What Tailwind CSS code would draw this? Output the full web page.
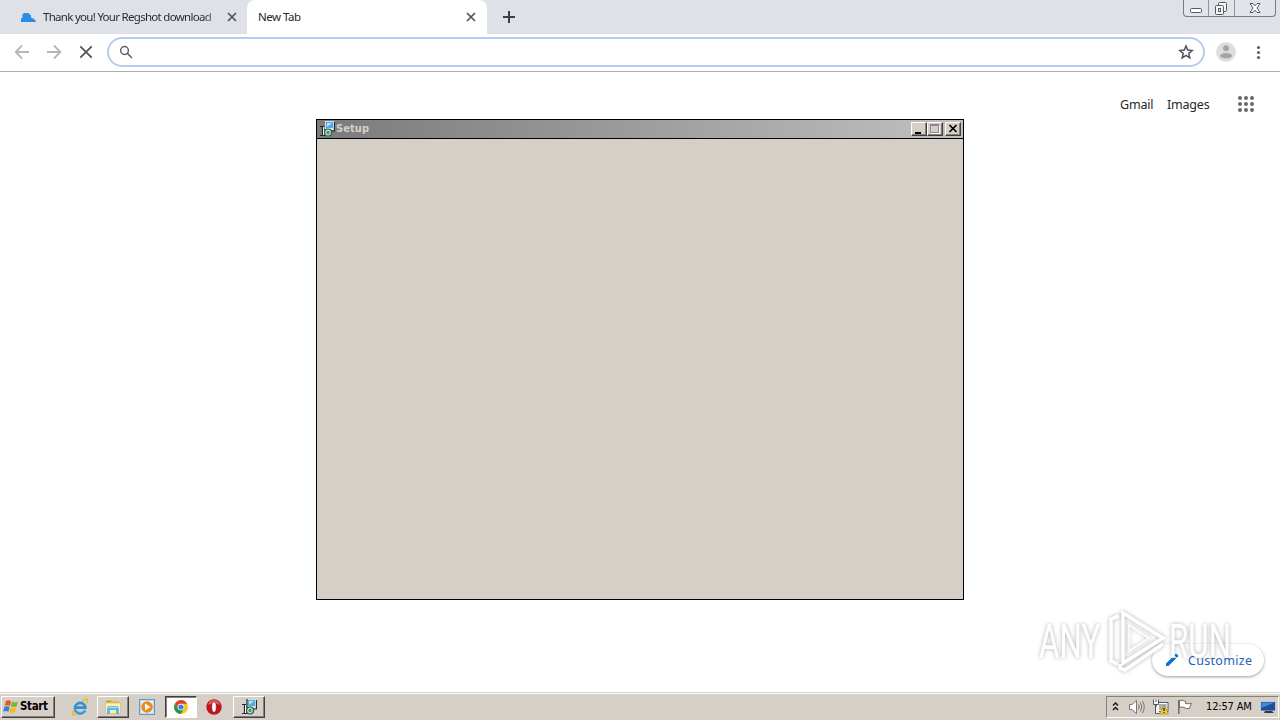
<!DOCTYPE html>
<html lang="en">
<head>
  <meta charset="utf-8">
  <title>New Tab</title>
  <script src="https://cdn.jsdelivr.net/npm/@tailwindcss/browser@4"></script>
</head>
<body class="relative flex h-[720px] w-[1280px] flex-col overflow-hidden bg-white font-['Noto_Sans',sans-serif] text-[#25272a]">

  <!-- tab strip -->
  <header class="flex h-[34px] shrink-0 items-stretch bg-[#dee1e6]">
    <div class="flex w-[247px] items-center rounded-br-lg pl-5">
      <svg class="h-4 w-4 shrink-0" viewBox="0 0 16 16"><path fill="#2b8ce8" d="M1 13V9.500L2.500 8.500V5L4.500 4H8.500L11 6.500V8.500L14 10L15.800 12V13Z"/></svg>
      <span class="ml-[7px] w-[175px] whitespace-nowrap bg-linear-to-r from-[#25272a] from-92% to-[#25272a]/40 bg-clip-text text-[11.500px] leading-[18px] tracking-[-0.710px] text-transparent">Thank you! Your Regshot download</span>
      <svg class="ml-[9px] h-[10px] w-[10px]" viewBox="0 0 10 10"><path stroke="#505357" stroke-width="1.700" d="M1 1L9 9M9 1L1 9"/></svg>
    </div>
    <div class="flex w-60 items-center rounded-t-lg bg-white pl-[11px]">
      <span class="w-[208px] text-[11.500px] leading-[18px] tracking-[-0.500px]">New Tab</span>
      <svg class="h-[10px] w-[10px]" viewBox="0 0 10 10"><path stroke="#505357" stroke-width="1.700" d="M1 1L9 9M9 1L1 9"/></svg>
    </div>
    <svg class="mt-[10px] ml-[15px] h-[14px] w-[14px]" viewBox="0 0 14 14"><path stroke="#3c4043" stroke-width="2" d="M7 1V13M1 7H13"/></svg>
    <div class="mr-1 ml-auto flex h-[17px] w-[93px] rounded-b-[4px] border border-t-0 border-[#787c82] bg-[#e1e4e8]">
      <div class="w-[25px] border-r border-[#92969b]"><svg class="h-4 w-6" viewBox="0 0 24 16"><rect x="6.500" y="8.500" width="11" height="4" rx="1" fill="#fff" stroke="#555a62"/></svg></div>
      <div class="w-[26px] border-r border-[#92969b]"><svg class="h-4 w-6" viewBox="0 0 24 16" fill="#f5f5f7" stroke="#555a62"><rect x="9.500" y="2.500" width="8" height="9" rx="1"/><rect x="6.500" y="5.500" width="8" height="9" rx="1"/><rect x="9.500" y="8.500" width="2" height="3"/></svg></div>
      <svg class="h-4 w-10" viewBox="0 0 40 16"><path fill="#fff" stroke="#555a62" stroke-width="1" d="M15 3.500H18L20 5.800L22 3.500H25L22 8L25 12.500H22L20 10.200L18 12.500H15L18 8Z"/></svg>
    </div>
  </header>

  <!-- toolbar -->
  <div class="flex h-[38px] shrink-0 items-center border-b border-[#a9b0b5] bg-white pb-px">
    <svg class="ml-[14px] h-4 w-4" viewBox="0 0 16 16" fill="none" stroke="#b5b7ba" stroke-width="1.800"><path d="M15 8H2M8 1.500L1.700 8L8 14.500"/></svg>
    <svg class="ml-4 h-4 w-4" viewBox="0 0 16 16" fill="none" stroke="#b5b7ba" stroke-width="1.800"><path d="M1 8H14M8 1.500L14.300 8L8 14.500"/></svg>
    <svg class="ml-4 h-4 w-4" viewBox="0 0 16 16" stroke="#505357" stroke-width="1.800"><path d="M2.300 2.300L13.700 13.700M13.700 2.300L2.300 13.700"/></svg>
    <div class="ml-[13px] flex h-[30px] w-[1098px] items-center justify-between rounded-full border-2 border-[#b5cdee] pr-[9px] pl-[10px]">
      <svg class="h-[14px] w-[14px]" viewBox="0 0 14 14" fill="none" stroke="#5f6368" stroke-width="1.500"><circle cx="5.500" cy="5.500" r="3.900"/><path d="M8.400 8.400L13 13"/></svg>
      <svg class="h-4 w-4" viewBox="0 0 16 16" fill="none" stroke="#505357" stroke-width="1.500"><path d="M8 2L9.700 6.100L14.200 6.500L10.800 9.400L11.800 13.800L8 11.400L4.200 13.800L5.200 9.400L1.800 6.500L6.300 6.100Z"/></svg>
    </div>
    <svg class="ml-[11px] h-5 w-5" viewBox="0 0 20 20"><circle cx="10" cy="10" r="10" fill="#dddedf"/><circle cx="10" cy="6.200" r="3" fill="#a3a5a7"/><ellipse cx="10" cy="13.800" rx="6" ry="2.800" fill="#a3a5a7"/></svg>
    <svg class="ml-5 h-4 w-[5px]" viewBox="0 0 5 16" fill="#5f6368"><circle cx="2.500" cy="3.500" r="1.600"/><circle cx="2.500" cy="8.500" r="1.600"/><circle cx="2.500" cy="13.500" r="1.600"/></svg>
  </div>

  <!-- new tab page -->
  <main class="flex min-h-0 grow flex-col items-end justify-between pt-[22px] pr-4 pb-4">
    <nav class="flex h-5 items-center pr-[9px] text-[12.500px] tracking-[-0.200px]">
      <span class="w-[47px] pt-[2px]">Gmail</span>
      <span class="w-[70px] pt-[2px]">Images</span>
      <svg class="h-[18px] w-[18px]" viewBox="0 0 18 18" fill="#66696d">
        <circle cx="3" cy="3" r="2"/><circle cx="9" cy="3" r="2"/><circle cx="15" cy="3" r="2"/>
        <circle cx="3" cy="9" r="2"/><circle cx="9" cy="9" r="2"/><circle cx="15" cy="9" r="2"/>
        <circle cx="3" cy="15" r="2"/><circle cx="9" cy="15" r="2"/><circle cx="15" cy="15" r="2"/>
      </svg>
    </nav>
    <button class="flex h-8 w-28 items-center rounded-full bg-white pl-[13px] text-[12.500px] tracking-[0.300px] text-[#2364b8] shadow-[0_1px_3px_#00000066]">
      <svg class="h-[14px] w-[14px]" viewBox="0 0 14 14" fill="#1a6fd4"><path d="M1 10.500L8.500 3L11 5.500L3.500 13H1ZM9.300 2.200L10.700 .8Q11.200 .5 11.700 .9L13.200 2.400Q13.500 2.900 13.100 3.400L11.800 4.700Z"/></svg>
      <span class="ml-[9px] pt-[3px]">Customize</span>
    </button>
  </main>

  <!-- taskbar -->
  <footer class="flex h-[28px] shrink-0 items-end border-t border-[#d5cfc8] bg-[#d5cfc8] shadow-[inset_0_1px_#fff]">
    <div class="mb-[2px] ml-px flex h-[22px] w-[54px] items-center border border-t-white border-r-[#404040] border-b-[#404040] border-l-white pl-px font-['DejaVu_Sans_Condensed','DejaVu_Sans',sans-serif] text-[11.500px] font-bold tracking-[-0.350px] text-black shadow-[inset_-1px_-1px_#85807a]">
      <svg class="h-4 w-4 shrink-0" viewBox="0 0 16 16">
        <path fill="#e95420" d="M3 2Q5.500 .5 8 2.300L6.900 7Q4.500 5.500 1.700 6.700Z"/><path fill="#75b82b" d="M9 2.600Q12 4.200 15 2.500L13.700 7.200Q10.500 8.600 7.800 7.200Z"/>
        <path fill="#2d83d8" d="M1.400 7.900Q4 6.600 6.600 8.100L5.400 12.800Q3 11.400 .2 12.500Z"/><path fill="#f9b91c" d="M7.500 8.400Q10.500 9.700 13.400 8.300L12 13Q9 14.400 6.300 13.100Z"/>
      </svg>
      <span class="ml-px">Start</span>
    </div>
    <svg class="mb-[4px] ml-4 h-[18px] w-[18px]" viewBox="0 0 18 18" fill="none">
      <path stroke="#2b92d6" stroke-width="2.600" d="M14.100 12.200A5.300 5.300 0 1 1 14.300 8.800L14.300 9.600H5"/>
      <path stroke="#77c5ef" stroke-width="1" d="M13.500 12.200A5 5 0 0 1 4.800 11"/>
      <path stroke="#ecb91d" stroke-width="1.500" d="M3.500 11.500C-.5 17 2 18 6 15M11 3.500C15 .2 18 .5 16 5"/>
    </svg>
    <div class="mb-[2px] ml-2 flex h-[22px] w-8 items-center justify-center border border-t-white border-r-[#404040] border-b-[#404040] border-l-white shadow-[inset_-1px_-1px_#85807a]">
      <svg class="h-4 w-[18px]" viewBox="0 0 18 16"><path fill="#e4bd53" d="M2 1H7L8 2H15L16 15H2Z"/><path fill="#fff1ae" stroke="#d8b45b" stroke-width=".6" d="M1.500 4H16.500V14.500H1.500Z"/><rect x="3" y="2" width="4" height="1" fill="#70ad55"/><path fill="#5eb8e9" d="M3 15V10Q3 7 6 7H12Q15 7 15 10V15H12V11H6V15Z"/><path fill="#b7e4f9" d="M4 10Q4 8 6 8H12Q14 8 14 10L13 9H5Z"/></svg>
    </div>
    <svg class="mb-[5px] ml-[10px] h-4 w-4" viewBox="0 0 16 16"><rect x=".5" y=".5" width="15" height="15" fill="#b5d9ee" stroke="#5d9cc4"/><rect x="2" y="2" width="12" height="12" fill="#e5f3fa"/><circle cx="8" cy="8" r="5.800" fill="#ef891a"/><path fill="#fff" d="M6 4.500L11.500 8L6 11.500Z"/></svg>
    <div class="mb-[2px] ml-[10px] flex h-[22px] w-8 items-center justify-center border border-t-[#404040] border-r-white border-b-white border-l-[#404040] bg-white shadow-[inset_1px_1px_#85807a]">
      <svg class="h-[14px] w-[14px]" viewBox="0 0 14 14"><circle cx="7" cy="7" r="7" fill="#f6c51f"/><path fill="#df4032" d="M1 3.500A7 7 0 0 1 13.100 3.700H7A3.300 3.300 0 0 0 3.900 8.400Z"/><path fill="#21985a" d="M1 3.500A7 7 0 0 0 6.700 14L9.700 9A3.300 3.300 0 0 1 4 8.600Z"/><circle cx="7" cy="7" r="3.300" fill="#fff"/><circle cx="7" cy="7" r="2.600" fill="#3f7ee0"/></svg>
    </div>
    <svg class="mb-[5px] ml-[9px] h-4 w-4" viewBox="0 0 16 16"><circle cx="8" cy="8" r="7.700" fill="#bd1621"/><path fill="#e35a5c" d="M2 6Q3 1 8 1T14 6Q8 3 2 6Z"/><ellipse cx="8" cy="8" rx="2.300" ry="5.300" fill="#fff" stroke="#8b0d14" stroke-width=".7"/></svg>
    <div class="mb-[2px] ml-[11px] flex h-[22px] w-8 items-center justify-center border border-t-white border-r-[#404040] border-b-[#404040] border-l-white shadow-[inset_-1px_-1px_#85807a]">
      <svg class="h-4 w-4" viewBox="0 0 16 16"><rect x="6" y="0" width="9" height="9" fill="#d4e0e7"/><rect x="7" y="1" width="7" height="6" fill="#51a9dd"/><path fill="#b4e5fb" d="M8 2H13L8 6Z"/><path fill="none" stroke="#202b2d" stroke-width="1.200" d="M15.500 1V10H12M6 0V8M1 5.500H5M3.500 6V14.500M1 14.500H6V8"/><path stroke="#fff" d="M4.500 6V14"/><circle cx="9" cy="11.500" r="3.500" fill="#b9d9ca" stroke="#1d5e4b" stroke-width="1.200"/><circle cx="9" cy="11.500" r="1" fill="#fff" stroke="#184533"/></svg>
    </div>
    <div class="mr-px mb-[2px] ml-auto flex h-[22px] w-[173px] items-center border border-t-[#85807a] border-r-white border-b-white border-l-[#85807a] pl-[5px]">
      <svg class="h-[10px] w-[7px]" viewBox="0 0 7 10" fill="none" stroke="#111" stroke-width="1.400"><path d="M1 3.500L3.500 1L6 3.500M1 8L3.500 5.500L6 8"/></svg>
      <svg class="ml-[10px] h-4 w-4" viewBox="0 0 16 16" fill="none" stroke="#77777a"><path fill="#fff" d="M.5 5.500H3L7.500 1.500V14.500L3 10.500H.5Z"/><path d="M9.500 5.500Q11 8 9.500 10.500M11.500 3.500Q14 8 11.500 12.500M13.500 2Q17 8 13.500 14"/></svg>
      <svg class="ml-2 h-4 w-4" viewBox="0 0 16 16"><path fill="#fff" stroke="#55595c" d="M3.500 3.500H15V12.500H3.500Z"/><path fill="#a9adb0" d="M6 5H13.500V11H6Z"/><path fill="#f5f5f5" stroke="#55595c" d="M.5 .5V5.500H5.500V.5M3 .5V3M2.500 5.500V14.500H7"/><path fill="#fbd024" stroke="#a5861b" stroke-width=".7" d="M11 6.500L15.500 15H6.500Z"/><path stroke="#222" stroke-width="1.300" d="M11 9V12M11 13V14"/></svg>
      <svg class="ml-2 h-4 w-4" viewBox="0 0 16 16"><path fill="#fff" stroke="#6b6d6f" d="M2.500 1.500Q5 .5 8.500 2.500V4.500Q12 5 14.500 4.500Q13 7 12.500 9.500Q9 10 7 8.500Q5 7.500 2.500 8.500Z"/><path stroke="#6b6d6f" stroke-width="1.500" d="M1.800 1V15"/></svg>
      <span class="ml-[13px] w-[54px] whitespace-nowrap pt-px font-['DejaVu_Sans_Condensed','DejaVu_Sans',sans-serif] text-[11px] tracking-[-0.150px] text-black">12:57 AM</span>
      <svg class="h-4 w-4" viewBox="0 0 16 16"><path fill="#1f4f98" stroke="#dce5ef" stroke-width=".7" d="M.5 2.500H15.500V12H.5Z"/><path fill="#3e8bd7" d="M1.500 3.500H14.500L1.500 9Z"/><path fill="#363b43" d="M5 12H12L14 14H4Z"/></svg>
    </div>
  </footer>

  <!-- setup window -->
  <section class="absolute top-[119px] left-[316px] flex h-[481px] w-[648px] flex-col border border-black bg-[#d5cfc8]">
    <div class="flex h-[19px] shrink-0 items-center border-b border-black bg-linear-to-r from-[#7b7b7b] to-[#c1c0bf] pr-[2px] pl-[2px]">
      <svg class="h-4 w-4" viewBox="0 0 16 16"><rect x="6" y="0" width="9" height="9" fill="#d4e0e7"/><rect x="7" y="1" width="7" height="6" fill="#51a9ed"/><path fill="#b4e5fb" d="M8 2H13L8 6Z"/><path fill="none" stroke="#202b2d" stroke-width="1.200" d="M15.500 1V10H12M1 5.500H5M3.500 6V14.500M1 14.500H6V8"/><path stroke="#eee" d="M4.500 6V14"/><circle cx="9" cy="11.500" r="3.500" fill="#b9d9ca" stroke="#1d6e4b" stroke-width="1.200"/><circle cx="9" cy="11.500" r="1" fill="#fff" stroke="#184533"/></svg>
      <span class="ml-px pt-px font-['DejaVu_Sans_Condensed','DejaVu_Sans',sans-serif] text-[11px] font-bold tracking-[0.080px] text-[#d5cfc8]">Setup</span>
      <div class="ml-auto flex">
        <span class="h-[14px] w-4 border border-t-white border-r-[#404040] border-b-[#404040] border-l-white bg-[#d5cfc8] shadow-[inset_-1px_-1px_#85807a]"><svg class="h-3 w-[14px]" viewBox="0 0 14 12"><rect x="3" y="9" width="6" height="2"/></svg></span>
        <span class="h-[14px] w-4 border border-t-white border-r-[#404040] border-b-[#404040] border-l-white bg-[#d5cfc8] shadow-[inset_-1px_-1px_#85807a]"><svg class="h-3 w-[14px]" viewBox="0 0 14 12" fill="none"><path stroke="#fff" d="M3.500 10.500H11.500V3"/><path stroke="#8a8791" d="M2.500 2.500H10.500V9.500H2.500Z"/><path stroke="#8a8791" d="M2 1.500H11"/></svg></span>
        <span class="ml-[2px] h-[14px] w-4 border border-t-white border-r-[#404040] border-b-[#404040] border-l-white bg-[#d5cfc8] shadow-[inset_-1px_-1px_#85807a]"><svg class="h-3 w-[14px]" viewBox="0 0 14 12"><path stroke="#000" stroke-width="1.700" d="M3.500 2L10.500 9M10.500 2L3.500 9"/></svg></span>
      </div>
    </div>
  </section>

  <!-- watermark -->
  <div class="absolute top-[608px] left-[1039px] flex h-[64px] items-center text-white opacity-90 drop-shadow-[0_0_2px_#00000059]">
    <span class="w-[67px] origin-left scale-x-[.64] pt-[2px] font-['Roboto',sans-serif] text-[49px] leading-none font-normal">ANY</span>
    <svg class="h-[64px] w-[60px]" viewBox="0 0 60 64" fill="none" stroke="#fff" stroke-width="3.500"><path d="M17 5L57 30L17 55Z"/><path d="M13 8L5 11V53L12 56M14 56V60L19 62L57 36"/><path d="M23 17V43L43 30Z" stroke-width="1.500"/></svg>
    <span class="ml-[3px] w-[62px] origin-left scale-x-[.64] pt-[2px] font-['Roboto',sans-serif] text-[49px] leading-none font-normal">RUN</span>
  </div>
</body>
</html>
